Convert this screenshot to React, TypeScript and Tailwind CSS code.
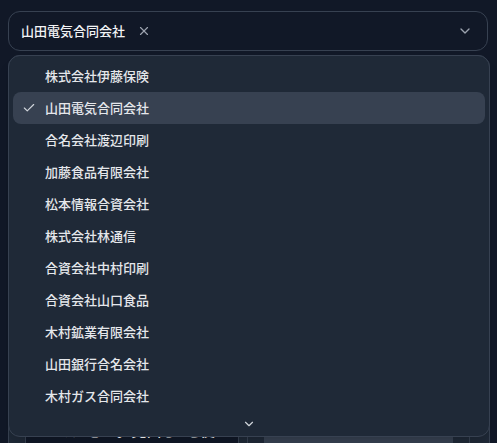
import React from "react";

const companies = [
    "株式会社伊藤保険",
    "山田電気合同会社",
    "合名会社渡辺印刷",
    "加藤食品有限会社",
    "松本情報合資会社",
    "株式会社林通信",
    "合資会社中村印刷",
    "合資会社山口食品",
    "木村鉱業有限会社",
    "山田銀行合名会社",
    "木村ガス合同会社",
];

const selected = "山田電気合同会社";

const font = { fontFamily: '"Noto Sans CJK JP", "Noto Sans", sans-serif' };

const Check = () => (
    <svg width="14" height="14" viewBox="0 0 24 24" fill="none" stroke="currentColor" strokeWidth="2" strokeLinecap="round" strokeLinejoin="round">
        <path d="M20 6 9 17l-5-5" />
    </svg>
);

const Chevron = ({ size = 16 }: { size?: number }) => (
    <svg width={size} height={size} viewBox="0 0 24 24" fill="none" stroke="currentColor" strokeWidth="2" strokeLinecap="round" strokeLinejoin="round">
        <path d="m6 9 6 6 6-6" />
    </svg>
);

const Close = () => (
    <svg width="14" height="14" viewBox="0 0 24 24" fill="none" stroke="currentColor" strokeWidth="2" strokeLinecap="round" strokeLinejoin="round">
        <path d="M18 6 6 18" />
        <path d="m6 6 12 12" />
    </svg>
);

export default function App() {
    return (
        <div className="w-[497px] h-[443px] overflow-hidden bg-[#111827] pt-[11px] px-[8px]" style={font}>
            <div className="relative w-[481px]">
                {/* トリガー */}
                <div className="h-[40px] w-[480px] flex items-center rounded-xl border border-[#374151] pl-[12px] pr-[14px]">
                    <span className="text-[13px] font-medium text-[#f3f4f6]">{selected}</span>
                    <span className="ml-[12px] text-[#9ca3af] flex items-center">
                        <Close />
                    </span>
                    <span className="ml-auto text-[#9ca3af] flex items-center">
                        <Chevron />
                    </span>
                </div>

                {/* 下のコンテンツ */}
                <div className="mt-[4px] h-[400px] w-[482px] rounded-xl border border-[#374151] bg-[#1f2937] flex flex-col">
                    <div className="flex-1" />
                    <div className="flex gap-[8px] pl-[16px] pr-[19px]">
                        <div className="w-[215px] h-[40px] border border-[#374151] bg-[#111827] pl-[16px] pt-[2px]">
                            <span className="text-[15px] font-medium text-white">てください。見出し1を使って</span>
                        </div>
                        <div className="flex-1 h-[40px] border-l border-[#374151] pl-[16px] flex gap-[16px]">
                            <div className="w-[189px] bg-[#374151]" />
                            <div className="flex-1 border-r border-[#374151]" />
                        </div>
                    </div>
                </div>

                {/* ドロップダウン */}
                <div className="absolute left-0 top-[44px] w-[482px] rounded-xl border border-[#374151] bg-[#1f2937] shadow-lg px-[4px] pt-[4px]">
                    {companies.map((name) => {
                        const isSel = name === selected;
                        return (
                            <div
                                key={name}
                                className={`h-[32px] flex items-center rounded-lg pl-[9px] ${isSel ? "bg-[#374151]" : ""}`}
                            >
                                <span className="w-[23px] flex items-center text-[#d1d5db]">{isSel && <Check />}</span>
                                <span className="text-[13px] font-medium text-[#e5e7eb]">{name}</span>
                            </div>
                        );
                    })}
                    <div className="h-[24px] flex items-center justify-center text-[#d1d5db]">
                        <Chevron size={14} />
                    </div>
                </div>
            </div>
        </div>
    );
}
